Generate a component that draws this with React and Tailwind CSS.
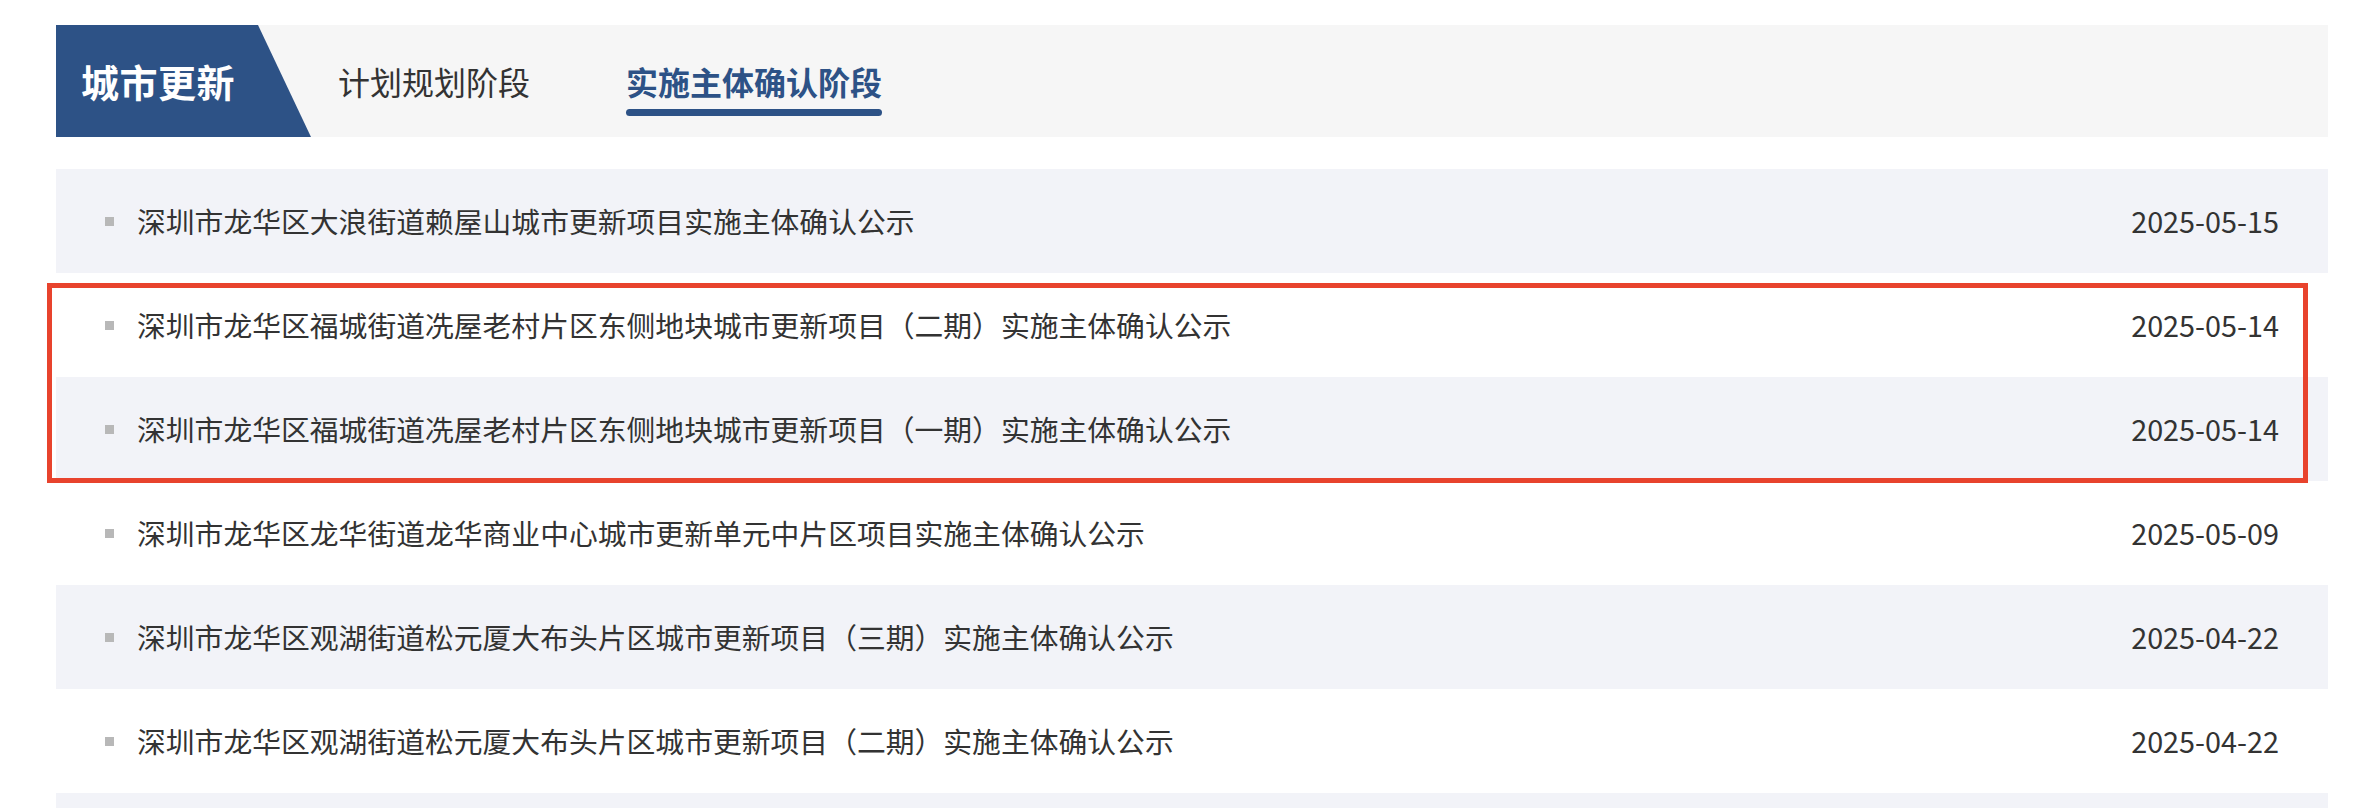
import React from "react";

const rows = [
  { title: "深圳市龙华区大浪街道赖屋山城市更新项目实施主体确认公示", date: "2025-05-15" },
  { title: "深圳市龙华区福城街道冼屋老村片区东侧地块城市更新项目（二期）实施主体确认公示", date: "2025-05-14" },
  { title: "深圳市龙华区福城街道冼屋老村片区东侧地块城市更新项目（一期）实施主体确认公示", date: "2025-05-14" },
  { title: "深圳市龙华区龙华街道龙华商业中心城市更新单元中片区项目实施主体确认公示", date: "2025-05-09" },
  { title: "深圳市龙华区观湖街道松元厦大布头片区城市更新项目（三期）实施主体确认公示", date: "2025-04-22" },
  { title: "深圳市龙华区观湖街道松元厦大布头片区城市更新项目（二期）实施主体确认公示", date: "2025-04-22" },
  { title: "", date: "" },
];

export default function App() {
  return (
    <div
      className="relative w-full h-[808px] overflow-hidden bg-white pt-[25px] pl-[56px] pr-[50px]"
      style={{ fontFamily: '"Noto Sans CJK SC", "Noto Sans", sans-serif' }}
    >
      {/* Header */}
      <div className="flex items-center h-[112px] w-[2272px] bg-[#f6f6f6]">
        <div className="self-stretch w-[255px] bg-[#2d5286] [clip-path:polygon(0_0,202px_0,100%_100%,0_100%)] flex items-center pl-[25px]">
          <span className="text-white font-bold text-[38px] leading-none tracking-[0.5px] whitespace-nowrap">
            城市更新
          </span>
        </div>
        <div className="ml-[27px] text-[32px] leading-none text-[#333] whitespace-nowrap">
          计划规划阶段
        </div>
        <div className="relative ml-[96px] text-[32px] leading-none font-bold text-[#2d5286] whitespace-nowrap">
          实施主体确认阶段
          <span className="absolute left-0 right-0 top-[44px] h-[7px] rounded-full bg-[#2d5286]" />
        </div>
      </div>

      {/* List */}
      <div className="mt-[32px] w-[2272px] flex flex-col">
        {rows.map((r, i) => (
          <div
            key={i}
            className={`h-[104px] shrink-0 flex items-center pl-[49px] pr-[49px] ${
              i % 2 === 0 ? "bg-[#f2f3f8]" : "bg-white"
            }`}
          >
            {r.title && (
              <>
                <span className="w-[9px] h-[9px] bg-[#b8b8b8] shrink-0" />
                <span className="ml-[23px] text-[28.8px] leading-none text-[#333] whitespace-nowrap">
                  {r.title}
                </span>
                <span className="ml-auto text-[28.8px] leading-none text-[#333] whitespace-nowrap">
                  {r.date}
                </span>
              </>
            )}
          </div>
        ))}
      </div>

      {/* Highlight annotation */}
      <div className="absolute left-[47px] top-[283px] w-[2261px] h-[200px] border-[5px] border-[#e8432d] pointer-events-none" />
    </div>
  );
}
